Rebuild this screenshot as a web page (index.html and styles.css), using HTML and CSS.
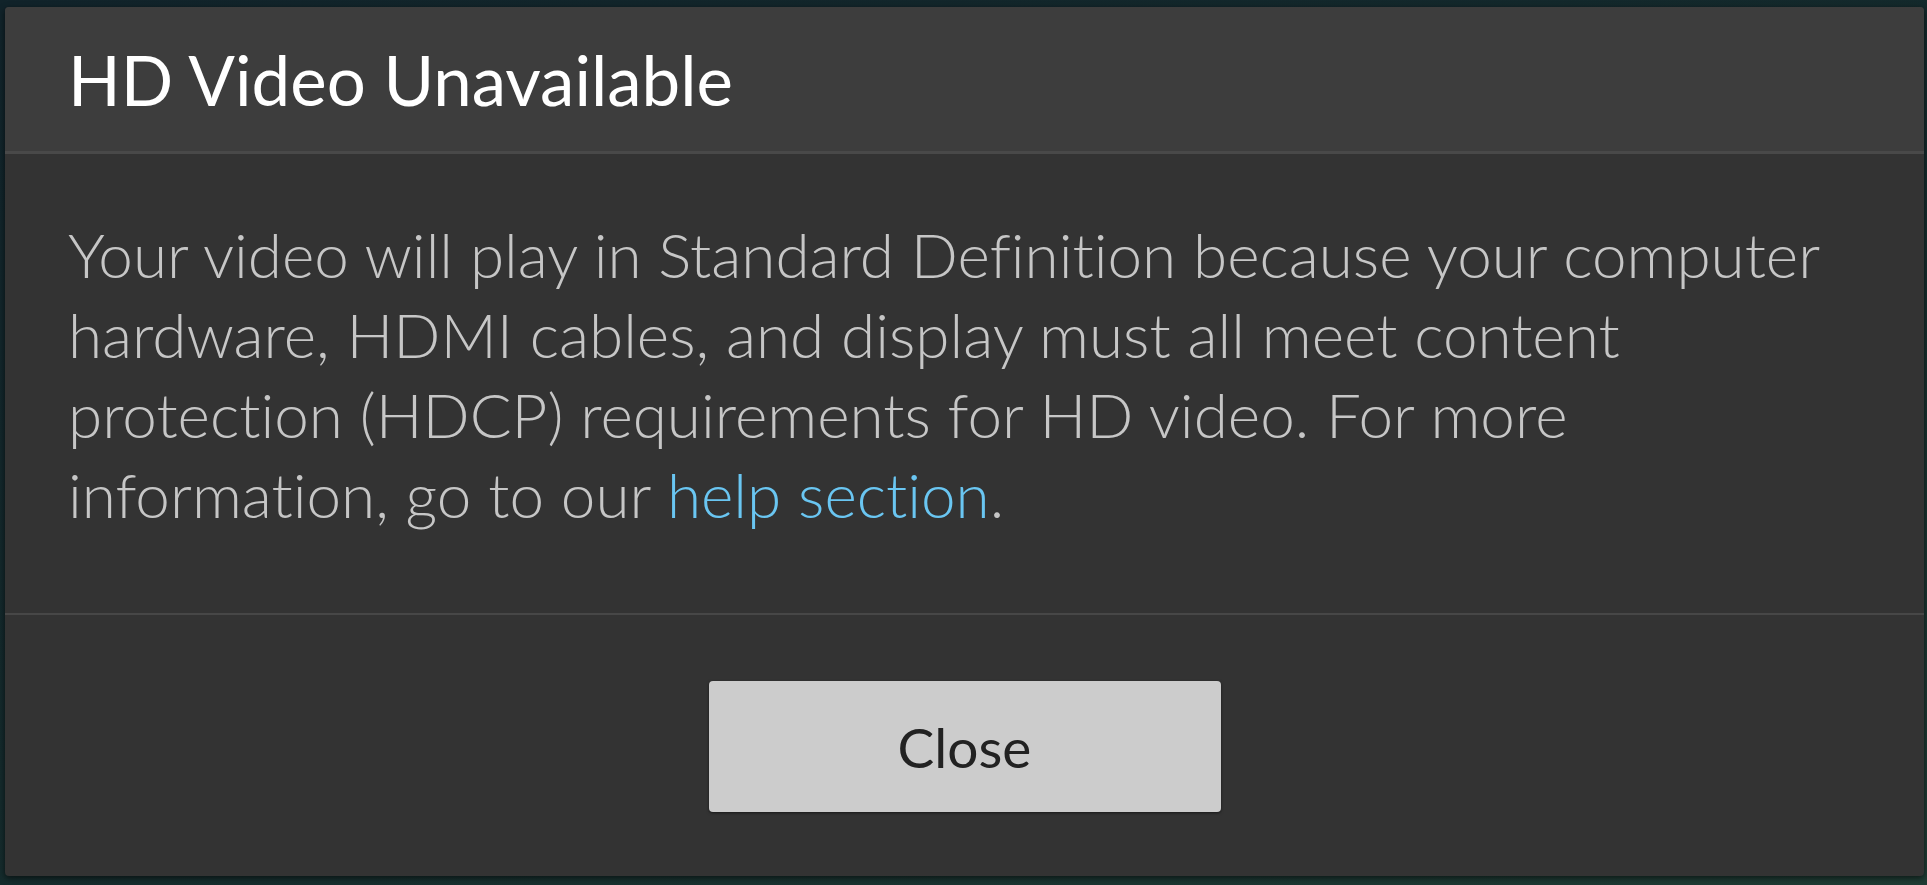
FILE: index.html
```html
<!DOCTYPE html>
<html lang="en">
<head>
<meta charset="utf-8">
<title>HD Video Unavailable</title>
<link rel="stylesheet" href="styles.css">
</head>
<body>
<div class="dialog" role="dialog" aria-labelledby="dlg-title">
  <header class="dialog-header">
    <h1 id="dlg-title" class="dialog-title">HD Video Unavailable</h1>
  </header>
  <div class="dialog-body">
    <p class="dialog-text">Your video will play in Standard Definition because your computer hardware, HDMI cables, and display must all meet content protection (HDCP) requirements for HD video. For more information, go to our <a class="help-link" href="#">help section</a>.</p>
  </div>
  <footer class="dialog-footer">
    <button class="close-btn" type="button">Close</button>
  </footer>
</div>
</body>
</html>
```
FILE: styles.css
```css
html, body {
  height: 100%;
}
body {
  margin: 0;
  background: linear-gradient(160deg, #11232a 0%, #142a2c 50%, #1f3c34 100%);
  font-family: Lato, "Liberation Sans", sans-serif;
  font-variant-ligatures: no-common-ligatures;
  display: flex;
  padding: 7px 3px 9px 5px;
  box-sizing: border-box;
}
.dialog {
  flex: 1;
  display: flex;
  flex-direction: column;
  background: #333333;
  border-radius: 4px;
  overflow: hidden;
  box-shadow: 0 2px 6px rgba(0, 0, 0, 0.6);
}
.dialog-header {
  height: 144px;
  background: #3d3d3d;
  border-bottom: 3px solid #494949;
  display: flex;
  align-items: center;
  padding: 0 63px;
  flex: none;
}
.dialog-title {
  margin: 0;
  font-size: 69px;
  font-weight: 400;
  color: #ffffff;
  line-height: 1;
}
.dialog-body {
  padding: 60px 63px 79px;
  border-bottom: 2px solid #474747;
  flex: none;
}
.dialog-text {
  margin: 0;
  font-size: 62px;
  font-weight: 300;
  line-height: 80px;
  color: #c6c6c6;
}
.help-link {
  color: #6ac6f2;
  text-decoration: none;
}
.dialog-footer {
  flex: 1;
  display: flex;
  justify-content: center;
  align-items: flex-start;
  padding-top: 66px;
}
.close-btn {
  width: 512px;
  height: 131px;
  background: #cccccc;
  border: none;
  border-radius: 4px;
  box-shadow: 0 1px 3px rgba(0, 0, 0, 0.55);
  font-family: Lato, "Liberation Sans", sans-serif;
  font-size: 55px;
  font-weight: 400;
  color: #222222;
  cursor: pointer;
}
```
